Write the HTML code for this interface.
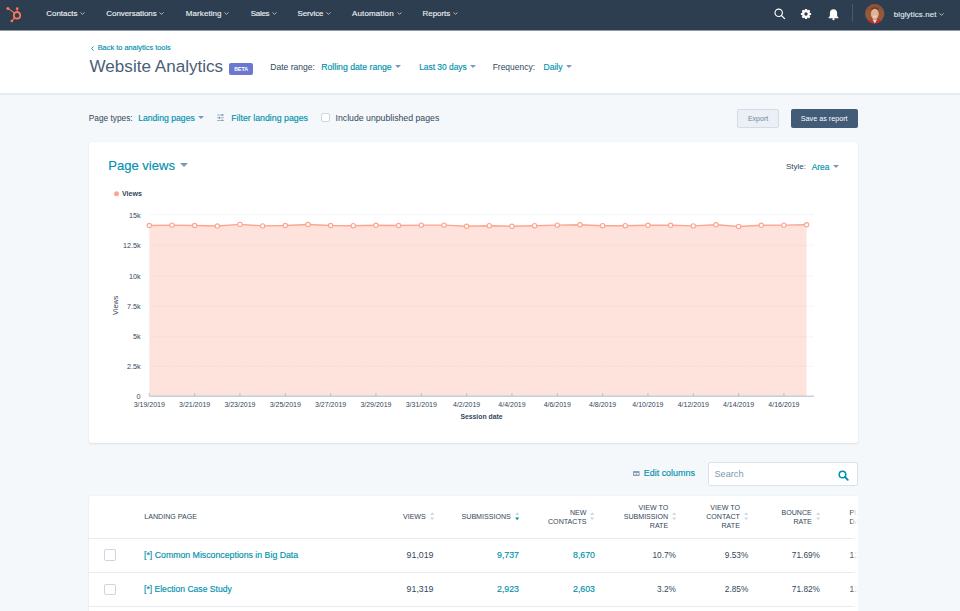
<!DOCTYPE html>
<html><head><meta charset="utf-8">
<style>
*{margin:0;padding:0;box-sizing:border-box}
html,body{width:960px;height:611px;overflow:hidden;background:#f5f8fa;font-family:"Liberation Sans",sans-serif;color:#33475b}
.a{position:absolute}
.t{position:absolute;white-space:nowrap;line-height:1}
#nav{left:0;top:0;width:960px;height:30px;background:#2d3e50}
.nv{color:#eef2f6;font-size:7.9px;top:10px;-webkit-text-stroke:0.12px #eef2f6}
.cv{position:relative;top:0px;margin-left:2.8px;vertical-align:middle}
.chev{display:inline-block;width:4px;height:4px;border-right:1px solid #cbd6e2;border-bottom:1px solid #cbd6e2;transform:rotate(45deg);margin-left:4px;position:relative;top:-2px}
#hdr{left:0;top:30px;width:960px;height:65px;background:#fff;border-bottom:2px solid #e6ebf0}
.link{color:#0091ae;-webkit-text-stroke:0.15px #0091ae}
.caret{display:inline-block;width:0;height:0;border-left:3.1px solid transparent;border-right:3.1px solid transparent;border-top:3.3px solid #7c98b6;margin-left:3.4px;position:relative;top:-2.1px}
#card{left:89px;top:142.4px;width:769px;height:300.4px;background:#fff;border-radius:2px;box-shadow:0 1px 2px rgba(45,62,80,.10),0 0 1px rgba(45,62,80,.16)}
#tcard{left:89px;top:495.8px;width:769px;height:140px;background:#fff;border-radius:2px;box-shadow:0 1px 2px rgba(45,62,80,.10),0 0 1px rgba(45,62,80,.16)}
.hd{font-size:7.1px;color:#33475b;text-align:right;line-height:9px}
.val{font-size:8.8px;text-align:right}
.sort{position:absolute;width:5px;height:9px}
</style></head><body>
<!-- NAV -->
<div class="a" id="nav">
  <svg class="a" style="left:4px;top:5px" width="22" height="20" viewBox="0 0 22 20">
    <g fill="#ff7a59" stroke="#ff7a59">
      <circle cx="13" cy="10.4" r="3.2" fill="none" stroke-width="1.7"/>
      <line x1="4" y1="3.4" x2="11" y2="8.4" stroke-width="1.1"/>
      <circle cx="3.9" cy="3.4" r="1.5" stroke="none"/>
      <line x1="13.2" y1="3.6" x2="13.2" y2="7" stroke-width="1.1"/>
      <circle cx="13.2" cy="3.5" r="1.3" stroke="none"/>
      <line x1="7.8" y1="16" x2="10.8" y2="12.8" stroke-width="1.1"/>
      <circle cx="7.8" cy="16" r="1.3" stroke="none"/>
    </g>
  </svg>
  <span class="t nv" style="left:46.3px;font-size:7.95px;top:9.97px;letter-spacing:-0.015px">Contacts<svg class="cv" width="5" height="3" viewBox="0 0 5 3"><polyline points="0.5,0.4 2.5,2.4 4.5,0.4" fill="none" stroke="#b9c7d5" stroke-width="0.9"/></svg></span>
  <span class="t nv" style="left:106.3px;font-size:7.95px;top:9.97px;letter-spacing:-0.028px">Conversations<svg class="cv" width="5" height="3" viewBox="0 0 5 3"><polyline points="0.5,0.4 2.5,2.4 4.5,0.4" fill="none" stroke="#b9c7d5" stroke-width="0.9"/></svg></span>
  <span class="t nv" style="left:185.8px;font-size:7.95px;top:9.97px;letter-spacing:0.111px">Marketing<svg class="cv" width="5" height="3" viewBox="0 0 5 3"><polyline points="0.5,0.4 2.5,2.4 4.5,0.4" fill="none" stroke="#b9c7d5" stroke-width="0.9"/></svg></span>
  <span class="t nv" style="left:250.8px;font-size:7.95px;top:9.97px;letter-spacing:-0.297px">Sales<svg class="cv" width="5" height="3" viewBox="0 0 5 3"><polyline points="0.5,0.4 2.5,2.4 4.5,0.4" fill="none" stroke="#b9c7d5" stroke-width="0.9"/></svg></span>
  <span class="t nv" style="left:297.5px;font-size:7.95px;top:9.97px;letter-spacing:-0.087px">Service<svg class="cv" width="5" height="3" viewBox="0 0 5 3"><polyline points="0.5,0.4 2.5,2.4 4.5,0.4" fill="none" stroke="#b9c7d5" stroke-width="0.9"/></svg></span>
  <span class="t nv" style="left:352px;font-size:7.95px;top:9.97px;letter-spacing:0.159px">Automation<svg class="cv" width="5" height="3" viewBox="0 0 5 3"><polyline points="0.5,0.4 2.5,2.4 4.5,0.4" fill="none" stroke="#b9c7d5" stroke-width="0.9"/></svg></span>
  <span class="t nv" style="left:422.6px;font-size:7.95px;top:9.97px;letter-spacing:-0.019px">Reports<svg class="cv" width="5" height="3" viewBox="0 0 5 3"><polyline points="0.5,0.4 2.5,2.4 4.5,0.4" fill="none" stroke="#b9c7d5" stroke-width="0.9"/></svg></span>
  <!-- right icons -->
  <svg class="a" style="left:772.6px;top:7px" width="14" height="14" viewBox="0 0 14 14">
    <circle cx="5.7" cy="5.8" r="3.7" fill="none" stroke="#fff" stroke-width="1.15"/>
    <line x1="8.4" y1="8.5" x2="11.6" y2="11.6" stroke="#fff" stroke-width="1.2" stroke-linecap="round"/>
  </svg>
  <svg class="a" style="left:799.8px;top:7.9px" width="12" height="12" viewBox="0 0 12 12">
    <g fill="#fff"><circle cx="6" cy="6" r="3.9"/>
    <rect x="4.9" y="0.9" width="2.2" height="10.2" rx=".5"/>
    <rect x="4.9" y="0.9" width="2.2" height="10.2" rx=".5" transform="rotate(45 6 6)"/>
    <rect x="4.9" y="0.9" width="2.2" height="10.2" rx=".5" transform="rotate(90 6 6)"/>
    <rect x="4.9" y="0.9" width="2.2" height="10.2" rx=".5" transform="rotate(135 6 6)"/></g>
    <circle cx="6" cy="6" r="1.7" fill="#2d3e50"/>
  </svg>
  <svg class="a" style="left:827px;top:7.6px" width="13" height="13" viewBox="0 0 13 13">
    <path d="M6.5 1.2c-2.2 0-3.6 1.6-3.6 3.8v3L1.6 9.6v.6h9.8v-.6L10.1 8V5c0-2.2-1.4-3.8-3.6-3.8z" fill="#fff"/>
    <circle cx="6.5" cy="11.2" r="1.1" fill="#fff"/>
  </svg>
  <div class="a" style="left:852px;top:4px;width:1px;height:18px;background:#425b76"></div>
  <svg class="a" style="left:865px;top:4px" width="20" height="20" viewBox="0 0 20 20">
    <defs><clipPath id="av"><circle cx="9.7" cy="9.75" r="9.7"/></clipPath></defs>
    <g clip-path="url(#av)">
      <rect width="20" height="20" fill="#93593a"/>
      <rect x="0" y="0" width="20" height="6" fill="#8a5236"/>
      <path d="M5.6 8.5 Q5.4 3 10 3.2 Q14.2 3 13.8 8.5 L13.4 6.3 Q10 4.6 6 6.3z" fill="#6e3f26"/>
      <ellipse cx="9.8" cy="10" rx="3.9" ry="5.3" fill="#e2b497"/>
      <ellipse cx="9.8" cy="12.5" rx="2" ry="1" fill="#f0cdb8"/>
      <path d="M1 20 L2.5 17 Q5 15.8 6.5 15 L9.8 20z" fill="#d8262f"/>
      <path d="M18.6 20 L17 17 Q14.6 15.8 13.1 15 L9.8 20z" fill="#d8262f"/>
      <path d="M7.5 15.5 L9.8 19.5 L12.1 15.5z" fill="#e8dcd6"/>
    </g>
  </svg>
  <span class="t nv" style="left:893.8px;font-size:7.95px;top:10.6px;letter-spacing:0.1px;color:#dfe6ec">biglytics.net<svg class="cv" width="5" height="3" viewBox="0 0 5 3"><polyline points="0.5,0.4 2.5,2.4 4.5,0.4" fill="none" stroke="#b9c7d5" stroke-width="0.9"/></svg></span>
</div>

<!-- HEADER -->
<div class="a" id="hdr"></div>
<div class="a" style="left:0;top:30px;width:960px;height:1px;background:#8d98a4"></div>
<svg class="a" style="left:90.5px;top:46px" width="3" height="5" viewBox="0 0 3 5"><polyline points="2.5,0.4 0.6,2.5 2.5,4.6" fill="none" stroke="#0091ae" stroke-width="0.9"/></svg>
<span class="t link" style="left:97.7px;top:44.2px;font-size:7.4px">Back to analytics tools</span>
<span class="t" style="left:89.5px;top:57.5px;font-size:17.1px;color:#4a5e75">Website Analytics</span>
<div class="a" style="left:229px;top:62.5px;width:24.3px;height:12px;background:#6a78d1;border-radius:2px;color:#fff;font-size:5.3px;font-weight:bold;text-align:center;line-height:12px">BETA</div>
<span class="t" style="left:270.3px;top:63.2px;font-size:8.55px">Date range:</span>
<span class="t link" style="left:321.2px;top:63.2px;font-size:8.7px">Rolling date range<i class="caret"></i></span>
<span class="t link" style="left:419.2px;top:63.2px;font-size:8.4px">Last 30 days<i class="caret"></i></span>
<span class="t" style="left:492.7px;top:63.2px;font-size:8.46px">Frequency:</span>
<span class="t link" style="left:543.6px;top:63.2px;font-size:8.5px">Daily<i class="caret"></i></span>

<!-- TOOLBAR -->
<span class="t" style="left:88.8px;top:113.6px;font-size:8.3px">Page types:</span>
<span class="t link" style="left:138.2px;top:113.6px;font-size:8.64px">Landing pages<i class="caret"></i></span>
<svg class="a" style="left:216.5px;top:113.5px" width="7.5" height="7.5" viewBox="0 0 7.5 7.5"><g stroke="#7c98b6" stroke-width=".7"><line x1="0" y1="1" x2="7.5" y2="1"/><line x1="0" y1="3.75" x2="7.5" y2="3.75"/><line x1="0" y1="6.5" x2="7.5" y2="6.5"/></g><g fill="#7c98b6"><rect x="4.6" y="0" width="1.2" height="2"/><rect x="1.8" y="2.75" width="1.2" height="2"/><rect x="4.6" y="5.5" width="1.2" height="2"/></g></svg>
<span class="t link" style="left:231.2px;top:113.6px;font-size:8.8px">Filter landing pages</span>
<div class="a" style="left:320.8px;top:113.2px;width:9.5px;height:9.3px;border:1px solid #cbd6e2;border-radius:2px;background:#fff"></div>
<span class="t" style="left:335.5px;top:113.6px;font-size:8.72px">Include unpublished pages</span>
<div class="a" style="left:737.3px;top:109px;width:41.5px;height:18.8px;background:#eaf0f6;border:1px solid #d3dce6;border-radius:2px;color:#6f86a1;font-size:7px;text-align:center;line-height:18.6px">Export</div>
<div class="a" style="left:790.7px;top:108.7px;width:67px;height:19px;background:#425b76;border-radius:2px;color:#fff;font-size:7.2px;text-align:center;line-height:19px">Save as report</div>

<!-- CHART CARD -->
<div class="a" id="card"></div>
<span class="t link" style="left:108.3px;top:159.3px;font-size:13.04px">Page views<i class="caret" style="border-width:4.3px 4.3px 0 4.3px;margin-left:4.6px;top:-3.2px"></i></span>
<span class="t" style="left:786px;top:163.2px;font-size:8px">Style:</span>
<span class="t link" style="left:811.7px;top:163.2px;font-size:8.33px">Area<i class="caret" style="margin-left:4px"></i></span>
<svg class="a" style="left:0;top:0" width="960" height="611" id="chart">
<path d="M149.5 396 L149.30 225.50 L171.97 225.13 L194.63 225.50 L217.30 226.06 L239.96 224.38 L262.63 225.88 L285.29 225.50 L307.96 224.56 L330.62 225.50 L353.29 225.69 L375.96 225.31 L398.62 225.50 L421.29 225.13 L443.95 225.13 L466.62 226.25 L489.28 225.69 L511.95 226.25 L534.61 225.69 L557.28 225.13 L579.94 224.75 L602.61 225.69 L625.28 225.69 L647.94 225.31 L670.61 225.31 L693.27 225.88 L715.94 224.75 L738.60 226.44 L761.27 225.31 L783.93 225.13 L806.60 224.75 L806.60 396 Z" fill="#fde3dc"/>
<line x1="149.5" y1="214.60" x2="814" y2="214.60" stroke="#c3cedb" stroke-opacity="0.5" stroke-width="0.7" stroke-dasharray="1.2 1.2"/>
<line x1="149.5" y1="245.40" x2="814" y2="245.40" stroke="#c3cedb" stroke-opacity="0.5" stroke-width="0.7" stroke-dasharray="1.2 1.2"/>
<line x1="149.5" y1="275.70" x2="814" y2="275.70" stroke="#c3cedb" stroke-opacity="0.5" stroke-width="0.7" stroke-dasharray="1.2 1.2"/>
<line x1="149.5" y1="306.40" x2="814" y2="306.40" stroke="#c3cedb" stroke-opacity="0.5" stroke-width="0.7" stroke-dasharray="1.2 1.2"/>
<line x1="149.5" y1="336.70" x2="814" y2="336.70" stroke="#c3cedb" stroke-opacity="0.5" stroke-width="0.7" stroke-dasharray="1.2 1.2"/>
<line x1="149.5" y1="366.30" x2="814" y2="366.30" stroke="#c3cedb" stroke-opacity="0.5" stroke-width="0.7" stroke-dasharray="1.2 1.2"/>
<path d="M149.30 225.50 L171.97 225.13 L194.63 225.50 L217.30 226.06 L239.96 224.38 L262.63 225.88 L285.29 225.50 L307.96 224.56 L330.62 225.50 L353.29 225.69 L375.96 225.31 L398.62 225.50 L421.29 225.13 L443.95 225.13 L466.62 226.25 L489.28 225.69 L511.95 226.25 L534.61 225.69 L557.28 225.13 L579.94 224.75 L602.61 225.69 L625.28 225.69 L647.94 225.31 L670.61 225.31 L693.27 225.88 L715.94 224.75 L738.60 226.44 L761.27 225.31 L783.93 225.13 L806.60 224.75" fill="none" stroke="#fca58f" stroke-width="1.4"/>
<circle cx="149.30" cy="225.50" r="2.15" fill="#fff" stroke="#fca58f" stroke-width="1.15"/>
<circle cx="171.97" cy="225.13" r="2.15" fill="#fff" stroke="#fca58f" stroke-width="1.15"/>
<circle cx="194.63" cy="225.50" r="2.15" fill="#fff" stroke="#fca58f" stroke-width="1.15"/>
<circle cx="217.30" cy="226.06" r="2.15" fill="#fff" stroke="#fca58f" stroke-width="1.15"/>
<circle cx="239.96" cy="224.38" r="2.15" fill="#fff" stroke="#fca58f" stroke-width="1.15"/>
<circle cx="262.63" cy="225.88" r="2.15" fill="#fff" stroke="#fca58f" stroke-width="1.15"/>
<circle cx="285.29" cy="225.50" r="2.15" fill="#fff" stroke="#fca58f" stroke-width="1.15"/>
<circle cx="307.96" cy="224.56" r="2.15" fill="#fff" stroke="#fca58f" stroke-width="1.15"/>
<circle cx="330.62" cy="225.50" r="2.15" fill="#fff" stroke="#fca58f" stroke-width="1.15"/>
<circle cx="353.29" cy="225.69" r="2.15" fill="#fff" stroke="#fca58f" stroke-width="1.15"/>
<circle cx="375.96" cy="225.31" r="2.15" fill="#fff" stroke="#fca58f" stroke-width="1.15"/>
<circle cx="398.62" cy="225.50" r="2.15" fill="#fff" stroke="#fca58f" stroke-width="1.15"/>
<circle cx="421.29" cy="225.13" r="2.15" fill="#fff" stroke="#fca58f" stroke-width="1.15"/>
<circle cx="443.95" cy="225.13" r="2.15" fill="#fff" stroke="#fca58f" stroke-width="1.15"/>
<circle cx="466.62" cy="226.25" r="2.15" fill="#fff" stroke="#fca58f" stroke-width="1.15"/>
<circle cx="489.28" cy="225.69" r="2.15" fill="#fff" stroke="#fca58f" stroke-width="1.15"/>
<circle cx="511.95" cy="226.25" r="2.15" fill="#fff" stroke="#fca58f" stroke-width="1.15"/>
<circle cx="534.61" cy="225.69" r="2.15" fill="#fff" stroke="#fca58f" stroke-width="1.15"/>
<circle cx="557.28" cy="225.13" r="2.15" fill="#fff" stroke="#fca58f" stroke-width="1.15"/>
<circle cx="579.94" cy="224.75" r="2.15" fill="#fff" stroke="#fca58f" stroke-width="1.15"/>
<circle cx="602.61" cy="225.69" r="2.15" fill="#fff" stroke="#fca58f" stroke-width="1.15"/>
<circle cx="625.28" cy="225.69" r="2.15" fill="#fff" stroke="#fca58f" stroke-width="1.15"/>
<circle cx="647.94" cy="225.31" r="2.15" fill="#fff" stroke="#fca58f" stroke-width="1.15"/>
<circle cx="670.61" cy="225.31" r="2.15" fill="#fff" stroke="#fca58f" stroke-width="1.15"/>
<circle cx="693.27" cy="225.88" r="2.15" fill="#fff" stroke="#fca58f" stroke-width="1.15"/>
<circle cx="715.94" cy="224.75" r="2.15" fill="#fff" stroke="#fca58f" stroke-width="1.15"/>
<circle cx="738.60" cy="226.44" r="2.15" fill="#fff" stroke="#fca58f" stroke-width="1.15"/>
<circle cx="761.27" cy="225.31" r="2.15" fill="#fff" stroke="#fca58f" stroke-width="1.15"/>
<circle cx="783.93" cy="225.13" r="2.15" fill="#fff" stroke="#fca58f" stroke-width="1.15"/>
<circle cx="806.60" cy="224.75" r="2.15" fill="#fff" stroke="#fca58f" stroke-width="1.15"/>
<line x1="149.5" y1="396.2" x2="814" y2="396.2" stroke="#a9bcd0" stroke-width="1"/>
<line x1="149.30" y1="393" x2="149.30" y2="396" stroke="#a9bcd0" stroke-width="0.9"/>
<text x="149.30" y="406.6" text-anchor="middle" font-size="7" fill="#33475b">3/19/2019</text>
<line x1="194.63" y1="393" x2="194.63" y2="396" stroke="#a9bcd0" stroke-width="0.9"/>
<text x="194.63" y="406.6" text-anchor="middle" font-size="7" fill="#33475b">3/21/2019</text>
<line x1="239.96" y1="393" x2="239.96" y2="396" stroke="#a9bcd0" stroke-width="0.9"/>
<text x="239.96" y="406.6" text-anchor="middle" font-size="7" fill="#33475b">3/23/2019</text>
<line x1="285.29" y1="393" x2="285.29" y2="396" stroke="#a9bcd0" stroke-width="0.9"/>
<text x="285.29" y="406.6" text-anchor="middle" font-size="7" fill="#33475b">3/25/2019</text>
<line x1="330.62" y1="393" x2="330.62" y2="396" stroke="#a9bcd0" stroke-width="0.9"/>
<text x="330.62" y="406.6" text-anchor="middle" font-size="7" fill="#33475b">3/27/2019</text>
<line x1="375.96" y1="393" x2="375.96" y2="396" stroke="#a9bcd0" stroke-width="0.9"/>
<text x="375.96" y="406.6" text-anchor="middle" font-size="7" fill="#33475b">3/29/2019</text>
<line x1="421.29" y1="393" x2="421.29" y2="396" stroke="#a9bcd0" stroke-width="0.9"/>
<text x="421.29" y="406.6" text-anchor="middle" font-size="7" fill="#33475b">3/31/2019</text>
<line x1="466.62" y1="393" x2="466.62" y2="396" stroke="#a9bcd0" stroke-width="0.9"/>
<text x="466.62" y="406.6" text-anchor="middle" font-size="7" fill="#33475b">4/2/2019</text>
<line x1="511.95" y1="393" x2="511.95" y2="396" stroke="#a9bcd0" stroke-width="0.9"/>
<text x="511.95" y="406.6" text-anchor="middle" font-size="7" fill="#33475b">4/4/2019</text>
<line x1="557.28" y1="393" x2="557.28" y2="396" stroke="#a9bcd0" stroke-width="0.9"/>
<text x="557.28" y="406.6" text-anchor="middle" font-size="7" fill="#33475b">4/6/2019</text>
<line x1="602.61" y1="393" x2="602.61" y2="396" stroke="#a9bcd0" stroke-width="0.9"/>
<text x="602.61" y="406.6" text-anchor="middle" font-size="7" fill="#33475b">4/8/2019</text>
<line x1="647.94" y1="393" x2="647.94" y2="396" stroke="#a9bcd0" stroke-width="0.9"/>
<text x="647.94" y="406.6" text-anchor="middle" font-size="7" fill="#33475b">4/10/2019</text>
<line x1="693.27" y1="393" x2="693.27" y2="396" stroke="#a9bcd0" stroke-width="0.9"/>
<text x="693.27" y="406.6" text-anchor="middle" font-size="7" fill="#33475b">4/12/2019</text>
<line x1="738.60" y1="393" x2="738.60" y2="396" stroke="#a9bcd0" stroke-width="0.9"/>
<text x="738.60" y="406.6" text-anchor="middle" font-size="7" fill="#33475b">4/14/2019</text>
<line x1="783.93" y1="393" x2="783.93" y2="396" stroke="#a9bcd0" stroke-width="0.9"/>
<text x="783.93" y="406.6" text-anchor="middle" font-size="7" fill="#33475b">4/16/2019</text>
<text x="140.5" y="218.10" text-anchor="end" font-size="7.2" fill="#33475b">15k</text>
<text x="140.5" y="248.30" text-anchor="end" font-size="7.2" fill="#33475b">12.5k</text>
<text x="140.5" y="278.50" text-anchor="end" font-size="7.2" fill="#33475b">10k</text>
<text x="140.5" y="308.70" text-anchor="end" font-size="7.2" fill="#33475b">7.5k</text>
<text x="140.5" y="338.90" text-anchor="end" font-size="7.2" fill="#33475b">5k</text>
<text x="140.5" y="369.10" text-anchor="end" font-size="7.2" fill="#33475b">2.5k</text>
<text x="140.5" y="399.30" text-anchor="end" font-size="7.2" fill="#33475b">0</text>
<circle cx="116.5" cy="193.8" r="2.5" fill="#fca58f"/>
<text x="122" y="196.4" font-size="7.1" font-weight="bold" fill="#33475b">Views</text>
<text x="481.5" y="419" text-anchor="middle" font-size="6.85" font-weight="bold" fill="#33475b">Session date</text>
<text transform="translate(118 305.3) rotate(-90)" text-anchor="middle" font-size="7.3" fill="#33475b">Views</text>
</svg>

<!-- TABLE -->
<svg class="a" style="left:633.4px;top:471.3px" width="6.6" height="5.2" viewBox="0 0 6.6 5.2"><rect x="0" y="0" width="6.6" height="5.2" rx="0.8" fill="#8a9fba"/><rect x="1.1" y="2" width="1.8" height="1.6" fill="#fff"/><rect x="3.7" y="2" width="1.8" height="1.6" fill="#fff"/></svg>
<span class="t link" style="left:643.75px;top:469px;font-size:8.95px">Edit columns</span>
<div class="a" style="left:708px;top:462.3px;width:149.6px;height:24px;background:#fff;border:1px solid #d9e1ea;border-radius:2.5px"></div>
<span class="t" style="left:714.4px;top:470.3px;font-size:9.2px;color:#7c98b6">Search</span>
<svg class="a" style="left:838px;top:470px" width="11" height="11" viewBox="0 0 11 11"><circle cx="4.5" cy="4.5" r="3.3" fill="none" stroke="#0091ae" stroke-width="1.5"/><line x1="7" y1="7" x2="9.8" y2="9.8" stroke="#0091ae" stroke-width="1.8" stroke-linecap="round"/></svg>
<div class="a" id="tcard"></div>
<div class="a" style="left:89px;top:537.6px;width:769px;height:1px;background:#e7ebf0"></div>
<div class="a" style="left:89px;top:572.1px;width:769px;height:1px;background:#e7ebf0"></div>
<div class="a" style="left:89px;top:605.6px;width:769px;height:1px;background:#e7ebf0"></div>
<span class="t hd" style="left:144.3px;top:513.2px">LANDING PAGE</span>
<span class="t hd" style="right:534.2px;top:513.2px">VIEWS</span>
<svg class="a" style="left:429.6px;top:511.8px" width="4.4" height="8.6" viewBox="0 0 4.4 8.6"><path d="M2.2 0.2 L4.2 2.9 L0.2 2.9z" fill="#cbd6e2"/><path d="M0.2 5.5 L4.2 5.5 L2.2 8.3z" fill="#cbd6e2"/></svg>
<span class="t hd" style="right:449.2px;top:513.2px">SUBMISSIONS</span>
<svg class="a" style="left:514.8px;top:511.8px" width="4.4" height="8.6" viewBox="0 0 4.4 8.6"><path d="M2.2 0.2 L4.2 2.9 L0.2 2.9z" fill="#cbd6e2"/><path d="M0.2 5.5 L4.2 5.5 L2.2 8.3z" fill="#0091ae"/></svg>
<span class="t hd" style="right:373.5px;top:508.7px">NEW<br>CONTACTS</span>
<svg class="a" style="left:590.3px;top:511.8px" width="4.4" height="8.6" viewBox="0 0 4.4 8.6"><path d="M2.2 0.2 L4.2 2.9 L0.2 2.9z" fill="#cbd6e2"/><path d="M0.2 5.5 L4.2 5.5 L2.2 8.3z" fill="#cbd6e2"/></svg>
<span class="t hd" style="right:291.8px;top:504.1px">VIEW TO<br>SUBMISSION<br>RATE</span>
<svg class="a" style="left:672.3px;top:511.8px" width="4.4" height="8.6" viewBox="0 0 4.4 8.6"><path d="M2.2 0.2 L4.2 2.9 L0.2 2.9z" fill="#cbd6e2"/><path d="M0.2 5.5 L4.2 5.5 L2.2 8.3z" fill="#cbd6e2"/></svg>
<span class="t hd" style="right:220.1px;top:504.1px">VIEW TO<br>CONTACT<br>RATE</span>
<svg class="a" style="left:743.9px;top:511.8px" width="4.4" height="8.6" viewBox="0 0 4.4 8.6"><path d="M2.2 0.2 L4.2 2.9 L0.2 2.9z" fill="#cbd6e2"/><path d="M0.2 5.5 L4.2 5.5 L2.2 8.3z" fill="#cbd6e2"/></svg>
<span class="t hd" style="right:148.2px;top:508.7px">BOUNCE<br>RATE</span>
<svg class="a" style="left:816px;top:511.8px" width="4.4" height="8.6" viewBox="0 0 4.4 8.6"><path d="M2.2 0.2 L4.2 2.9 L0.2 2.9z" fill="#cbd6e2"/><path d="M0.2 5.5 L4.2 5.5 L2.2 8.3z" fill="#cbd6e2"/></svg>
<span class="t hd" style="left:849.6px;top:508.7px;text-align:left">PUBLISH<br>DATE</span>
<div class="a" style="left:104px;top:549.4px;width:11.6px;height:11.6px;border:1px solid #cbd6e2;border-radius:2px;background:#fff"></div>
<div class="a" style="left:104px;top:583.6px;width:11.6px;height:11.6px;border:1px solid #cbd6e2;border-radius:2px;background:#fff"></div>
<span class="t link" style="left:144px;top:550.8px;font-size:8.76px">[*] Common Misconceptions in Big Data</span>
<span class="t link" style="left:144px;top:584.8px;font-size:8.58px">[*] Election Case Study</span>
<span class="t val" style="right:526.5px;top:550.6px">91,019</span>
<span class="t val link" style="right:441px;top:550.6px">9,737</span>
<span class="t val link" style="right:365px;top:550.6px">8,670</span>
<span class="t val" style="right:284px;top:550.85px;font-size:8.3px">10.7%</span>
<span class="t val" style="right:211.7px;top:550.85px;font-size:8.3px">9.53%</span>
<span class="t val" style="right:140px;top:550.85px;font-size:8.3px">71.69%</span>
<span class="t val" style="left:849.6px;top:550.6px;text-align:left">12/4/2018</span>
<span class="t val" style="right:526.5px;top:584.5px">91,319</span>
<span class="t val link" style="right:441px;top:584.5px">2,923</span>
<span class="t val link" style="right:365px;top:584.5px">2,603</span>
<span class="t val" style="right:284px;top:584.75px;font-size:8.3px">3.2%</span>
<span class="t val" style="right:211.7px;top:584.75px;font-size:8.3px">2.85%</span>
<span class="t val" style="right:140px;top:584.75px;font-size:8.3px">71.82%</span>
<span class="t val" style="left:849.6px;top:584.5px;text-align:left">12/4/2018</span>
<div class="a" style="left:858px;top:490px;width:102px;height:121px;background:#f5f8fa"></div>
<div class="a" style="left:851px;top:496px;width:7px;height:115px;background:linear-gradient(to right,rgba(255,255,255,0),rgba(255,255,255,.95) 80%)"></div>
</body></html>
